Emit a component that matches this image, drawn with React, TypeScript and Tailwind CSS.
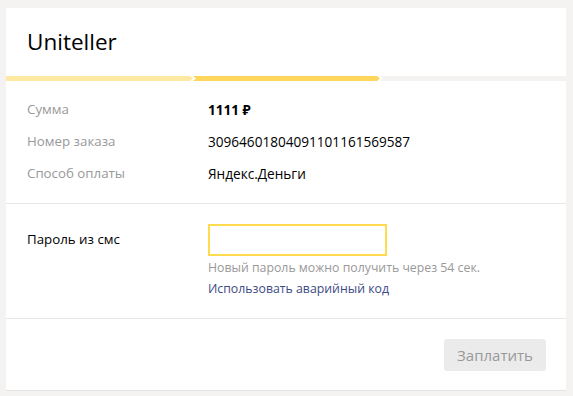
const FONT = "font-['Open_Sans','Noto_Sans',sans-serif]";

const InfoRow = ({ label, value, bold }: { label: string; value: string; bold?: boolean }) => (
  <div className="flex h-[32px] items-center">
    <div className="w-[181px] shrink-0 text-[13.3px] text-[#999]">{label}</div>
    <div className={bold ? "text-[13.5px] font-bold text-black" : "text-[13.6px] text-black"}>{value}</div>
  </div>
);

export default function App() {
  return (
    <div className={`${FONT} min-h-[396px] bg-[#f4f3f1] px-[6px] pt-[8px] text-[13px]`}>
      <div className="w-[560px]">
        {/* header */}
        <div className="flex h-[68px] items-center bg-white pl-[21px] text-[22.5px] text-black">
          Uniteller
        </div>

        {/* progress */}
        <div className="flex h-[5px] bg-white">
          <div className="h-full w-[188px] bg-[#fee9a3] [clip-path:polygon(0_0,calc(100%_-_4px)_0,calc(100%_-_1px)_50%,calc(100%_-_4px)_100%,0_100%)]" />
          <div className="-ml-[1px] h-full w-[188px] bg-[#ffd65c] [clip-path:polygon(0_0,calc(100%_-_4px)_0,calc(100%_-_1px)_50%,calc(100%_-_4px)_100%,0_100%,3px_50%)]" />
          <div className="-ml-[1px] h-full flex-1 bg-[#f4f3f1] [clip-path:polygon(0_0,100%_0,100%_100%,0_100%,3px_50%)]" />
        </div>

        {/* body */}
        <div className="border-b border-[#e3e3e3] bg-white">
          <div className="px-[21px] py-[13px]">
            <InfoRow label="Сумма" value="1111 ₽" bold />
            <InfoRow label="Номер заказа" value="30964601804091101161569587" />
            <InfoRow label="Способ оплаты" value="Яндекс.Деньги" />
          </div>

          <div className="border-t border-[#e6e6e6] px-[21px] pb-[19px] pt-[20px]">
            <div className="flex">
              <div className="flex h-[32px] w-[181px] shrink-0 items-center text-[13.3px] text-black">Пароль из смс</div>
              <div>
                <input
                  type="text"
                  className="block h-[32px] w-[179px] border-2 border-[#ffdb4d] bg-white px-2 outline-none"
                />
                <div className="mt-[2px] h-[20px] leading-[20px] text-[12.3px] text-[#999]">
                  Новый пароль можно получить через 54 сек.
                </div>
                <div className="h-[21px] leading-[21px] text-[12.3px] text-[#3d4a85]">
                  Использовать аварийный код
                </div>
              </div>
            </div>
          </div>

          <div className="flex justify-end border-t border-[#e6e6e6] pb-[19px] pr-[20px] pt-[20px]">
            <button className="h-[32px] w-[102px] rounded-[3px] bg-[#ebebeb] text-[15px] text-[#999]">
              Заплатить
            </button>
          </div>
        </div>
      </div>
    </div>
  );
}
